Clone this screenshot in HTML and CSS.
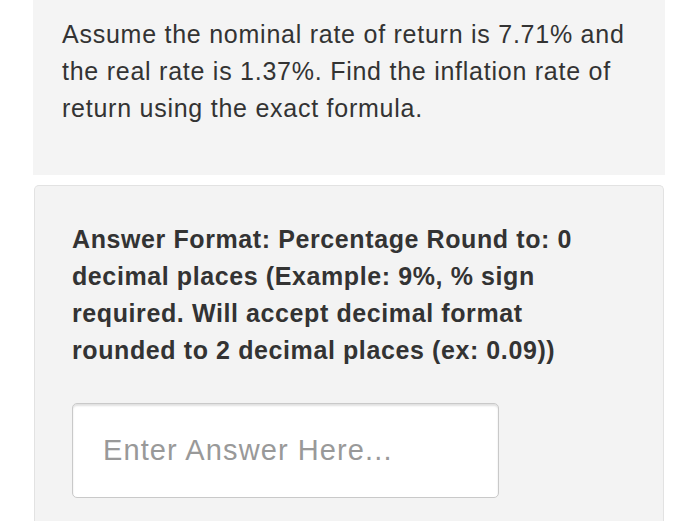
FILE: index.html
```html
<!DOCTYPE html>
<html>
<head>
<meta charset="utf-8">
<link rel="stylesheet" href="styles.css">
</head>
<body>
<div class="page">
  <div class="question">
    <p>Assume the nominal rate of return is 7.71% and the real rate is 1.37%. Find the inflation rate of return using the exact formula.</p>
  </div>
  <div class="answer-card">
    <p class="format">Answer Format: Percentage Round to: 0 decimal places (Example: 9%, % sign required. Will accept decimal format rounded to 2 decimal places (ex: 0.09))</p>
    <div class="input">Enter Answer Here...</div>
  </div>
</div>
</body>
</html>
```
FILE: styles.css
```css
html, body {
  margin: 0;
  padding: 0;
  background: #ffffff;
  height: 521px;
  overflow: hidden;
}
.page {
  padding-left: 33px;
  width: 632px;
  font-family: "Liberation Sans", Arial, sans-serif;
  color: #333333;
}
.question {
  background: #f4f4f4;
  height: 175px;
  box-sizing: border-box;
  padding: 16px 13px 0 29px;
}
.question p {
  margin: 0;
  font-size: 25px;
  letter-spacing: 0.75px;
  line-height: 37px;
}
.answer-card {
  margin-top: 10px;
  margin-left: 1px;
  margin-right: 1px;
  background: #f3f3f3;
  border: 1px solid #e2e2e2;
  border-bottom: none;
  border-radius: 5px 5px 0 0;
  box-sizing: border-box;
  padding: 35px 30px 0 37px;
  height: 336px;
}
.format {
  margin: 0;
  width: 520px;
  font-size: 25px;
  letter-spacing: 0.6px;
  font-weight: bold;
  line-height: 37px;
  color: #333333;
}
.input {
  margin-top: 34px;
  width: 427px;
  height: 95px;
  box-sizing: border-box;
  background: #ffffff;
  border: 1px solid #c9c9c9;
  border-radius: 5px;
  box-shadow: inset 0 2px 2px rgba(0,0,0,0.12);
  padding-left: 30px;
  display: flex;
  align-items: center;
  font-size: 29px;
  letter-spacing: 1.1px;
  color: #999999;
}
```
